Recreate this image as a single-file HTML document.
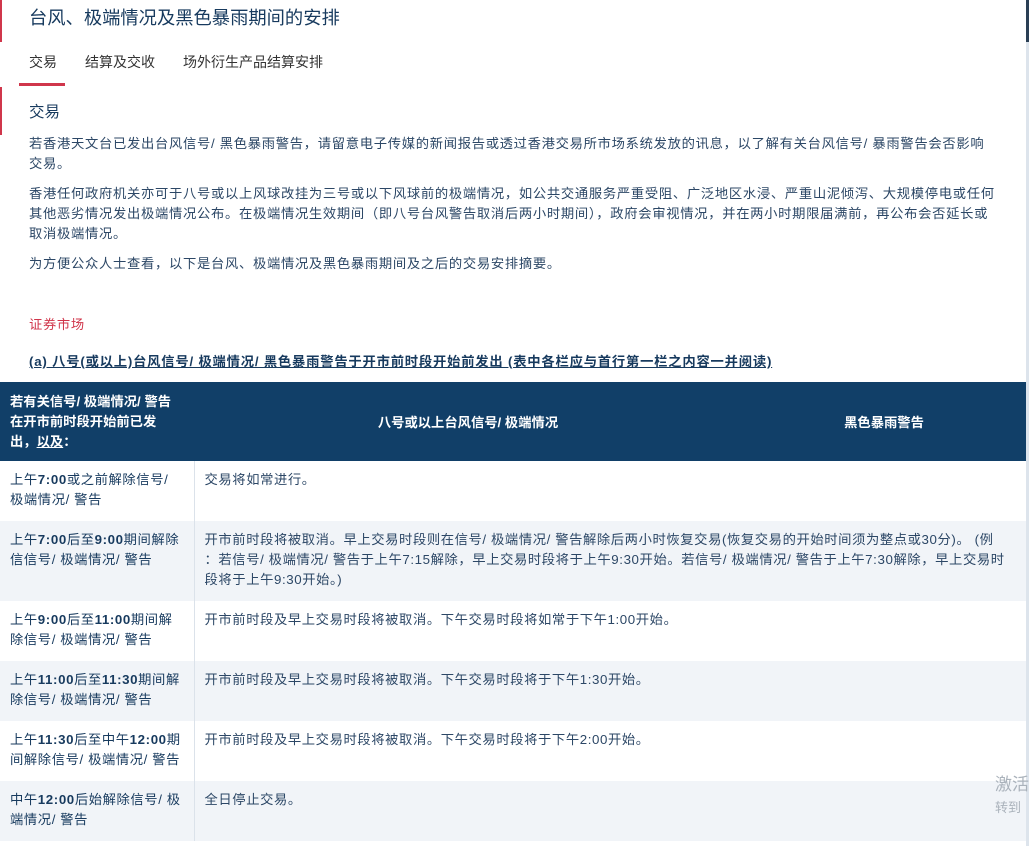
<!DOCTYPE html>
<html><head><meta charset="utf-8"><style>
body{margin:0;width:1029px;height:846px;overflow:hidden;background:#fff;font-family:"Liberation Sans","Noto Sans CJK SC",sans-serif;color:#1d3a5c;position:relative}
.bar{position:absolute;left:0;width:2px;background:#d0364b}
.sb{position:absolute;right:0;width:3px;top:0;height:846px;background:#dde4ec}
h1{position:absolute;left:29px;top:5px;margin:0;font-size:18.3px;font-weight:normal;color:#173a5e;line-height:26px;white-space:nowrap}
.tabs{position:absolute;top:52px;left:29px;font-size:14px;color:#333}
.tabs span{position:absolute;white-space:nowrap}
.ul{position:absolute;left:19px;top:83px;width:46px;height:3px;background:#d0364b}
h2{position:absolute;left:29px;top:100px;margin:0;font-size:15.5px;font-weight:normal;color:#173a5e}
.p{position:absolute;left:29px;font-size:13.3px;line-height:20px;color:#2c4766;margin:0;letter-spacing:0.7px;white-space:nowrap}
.red{position:absolute;left:29px;top:314px;font-size:13.3px;color:#d0364b;letter-spacing:0.65px}
.lk{position:absolute;left:29px;top:351px;font-size:13.3px;color:#173a5e;text-decoration:underline;font-weight:bold;white-space:nowrap;letter-spacing:0.8px}
table{position:absolute;left:0;top:382px;width:1026px;border-collapse:collapse;font-size:13.3px;table-layout:fixed;letter-spacing:0.6px}
th{background:#113f68;color:#fff;font-weight:bold;height:79px;text-align:center;padding:0;box-sizing:border-box;letter-spacing:0}
th.f{text-align:left;padding:0 8px 0 10px;width:194px;line-height:20px}
td{vertical-align:top;padding:9px 12px 9px 10px;line-height:20px;color:#2c4766;box-sizing:border-box;white-space:nowrap}
td.f{border-right:1px solid #dbe2ea;color:#173a5e;padding-right:6px}
tr.g td{background:#f1f4f8}
</style></head><body>
<div class="bar" style="top:0;height:42px"></div>
<div class="bar" style="top:87px;height:48px"></div>
<div class="sb"></div>
<div style="position:absolute;right:0;top:0;width:3px;height:42px;background:#2a3f55"></div>
<h1>台风、极端情况及黑色暴雨期间的安排</h1>
<div class="tabs"><span style="left:0">交易</span><span style="left:56px">结算及交收</span><span style="left:154px">场外衍生产品结算安排</span></div>
<div class="ul"></div>
<h2>交易</h2>
<p class="p" style="top:134px">若香港天文台已发出台风信号/ 黑色暴雨警告，请留意电子传媒的新闻报告或透过香港交易所市场系统发放的讯息，以了解有关台风信号/ 暴雨警告会否影响<br>交易。</p>
<p class="p" style="top:184px">香港任何政府机关亦可于八号或以上风球改挂为三号或以下风球前的极端情况，如公共交通服务严重受阻、广泛地区水浸、严重山泥倾泻、大规模停电或任何<br>其他恶劣情况发出极端情况公布。在极端情况生效期间（即八号台风警告取消后两小时期间），政府会审视情况，并在两小时期限届满前，再公布会否延长或<br>取消极端情况。</p>
<p class="p" style="top:254px">为方便公众人士查看，以下是台风、极端情况及黑色暴雨期间及之后的交易安排摘要。</p>
<div class="red">证券市场</div>
<div class="lk">(a) 八号(或以上)台风信号/ 极端情况/ 黑色暴雨警告于开市前时段开始前发出 (表中各栏应与首行第一栏之内容一并阅读)</div>
<table>
<colgroup><col style="width:194px"><col style="width:548px"><col></colgroup>
<tr><th class="f">若有关信号/ 极端情况/ 警告<br>在开市前时段开始前已发<br>出，<u>以及</u>：</th><th>八号或以上台风信号/ 极端情况</th><th>黑色暴雨警告</th></tr>
<tr style="height:60px"><td class="f">上午<b>7:00</b>或之前解除信号/<br>极端情况/ 警告</td><td colspan="2">交易将如常进行。</td></tr>
<tr class="g" style="height:80px"><td class="f">上午<b>7:00</b>后至<b>9:00</b>期间解除<br>信信号/ 极端情况/ 警告</td><td colspan="2">开市前时段将被取消。早上交易时段则在信号/ 极端情况/ 警告解除后两小时恢复交易(恢复交易的开始时间须为整点或30分)。 (例<br>：若信号/ 极端情况/ 警告于上午7:15解除，早上交易时段将于上午9:30开始。若信号/ 极端情况/ 警告于上午7:30解除，早上交易时<br>段将于上午9:30开始。)</td></tr>
<tr style="height:60px"><td class="f">上午<b>9:00</b>后至<b>11:00</b>期间解<br>除信号/ 极端情况/ 警告</td><td colspan="2">开市前时段及早上交易时段将被取消。下午交易时段将如常于下午1:00开始。</td></tr>
<tr class="g" style="height:60px"><td class="f">上午<b>11:00</b>后至<b>11:30</b>期间解<br>除信号/ 极端情况/ 警告</td><td colspan="2">开市前时段及早上交易时段将被取消。下午交易时段将于下午1:30开始。</td></tr>
<tr style="height:60px"><td class="f">上午<b>11:30</b>后至中午<b>12:00</b>期<br>间解除信号/ 极端情况/ 警告</td><td colspan="2">开市前时段及早上交易时段将被取消。下午交易时段将于下午2:00开始。</td></tr>
<tr class="g" style="height:60px"><td class="f">中午<b>12:00</b>后始解除信号/ 极<br>端情况/ 警告</td><td colspan="2">全日停止交易。</td></tr>
</table>
<div style="position:absolute;left:995px;top:770px;font-size:17px;color:#aab2bb;white-space:nowrap">激活</div>
<div style="position:absolute;left:995px;top:797px;font-size:13px;color:#aab2bb;white-space:nowrap">转到</div>
</body></html>
